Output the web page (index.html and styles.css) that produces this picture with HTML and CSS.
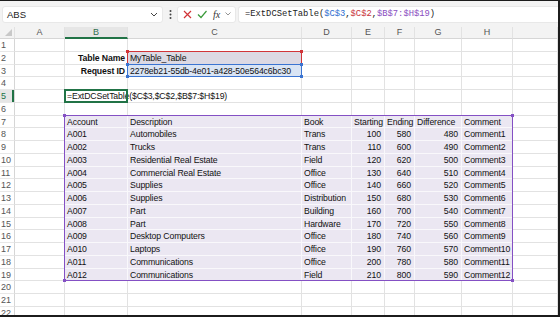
FILE: index.html
```html
<!DOCTYPE html>
<html lang="en">
  <head>
    <meta charset="UTF-8" />
    <title>ExtDCSetTable</title>
    <link rel="stylesheet" href="styles.css">
  </head>
  <body>
    <div class="app">
      <div class="formula-bar">
        <div class="name-box">
          <span>ABS</span>
          <svg width="8" height="5" viewBox="0 0 8 5"><path d="M1 1l3 3 3-3" fill="none" stroke="#444" stroke-width="1"/></svg>
        </div>
        <div class="dots">
          <svg width="3" height="9" viewBox="0 0 3 9"><circle cx="1.5" cy="1" r="1" fill="#444"/><circle cx="1.5" cy="4.5" r="1" fill="#444"/><circle cx="1.5" cy="8" r="1" fill="#444"/></svg>
        </div>
        <div class="fx-box">
          <svg width="9" height="9" viewBox="0 0 9 9"><path d="M1 1l7 7M8 1l-7 7" stroke="#d13438" stroke-width="1.2"/></svg>
          <svg width="10" height="9" viewBox="0 0 10 9"><path d="M1 4.5l3 3 5.5-6.5" fill="none" stroke="#3a9a3a" stroke-width="1.2"/></svg>
          <span class="fx">fx</span>
          <svg width="6" height="4" viewBox="0 0 6 4"><path d="M0.5 0.5l2.5 2.5 2.5-2.5" fill="none" stroke="#888" stroke-width="0.9"/></svg>
        </div>
        <div class="formula">=ExtDCSetTable(<span class="blue">$C$3</span>,<span class="red">$C$2</span>,<span class="purple">$B$7:$H$19</span>)</div>
      </div>

      <div class="sheet">
        <!-- column headers -->
        <div class="row">
          <div class="hd corner"></div>
          <div class="hd">A</div>
          <div class="hd sel">B</div>
          <div class="hd">C</div>
          <div class="hd">D</div>
          <div class="hd">E</div>
          <div class="hd">F</div>
          <div class="hd">G</div>
          <div class="hd">H</div>
          <div class="hd"></div>
        </div>

        <div class="row">
          <div class="rh">1</div>
          <div class="c"></div><div class="c"></div><div class="c"></div><div class="c"></div><div class="c"></div><div class="c"></div><div class="c"></div><div class="c"></div><div class="c"></div>
        </div>
        <div class="row">
          <div class="rh">2</div>
          <div class="c"></div><div class="c lbl">Table Name</div><div class="c name">MyTable_Table</div><div class="c"></div><div class="c"></div><div class="c"></div><div class="c"></div><div class="c"></div><div class="c"></div>
        </div>
        <div class="row">
          <div class="rh">3</div>
          <div class="c"></div><div class="c lbl">Request ID</div><div class="c req">2278eb21-55db-4e01-a428-50e564c6bc30</div><div class="c"></div><div class="c"></div><div class="c"></div><div class="c"></div><div class="c"></div><div class="c"></div>
        </div>
        <div class="row">
          <div class="rh">4</div>
          <div class="c"></div><div class="c"></div><div class="c"></div><div class="c"></div><div class="c"></div><div class="c"></div><div class="c"></div><div class="c"></div><div class="c"></div>
        </div>
        <div class="row">
          <div class="rh sel">5</div>
          <div class="c"></div><div class="c">=ExtDCSetTable($C$3,$C$2,$B$7:$H$19)</div><div class="c"></div><div class="c"></div><div class="c"></div><div class="c"></div><div class="c"></div><div class="c"></div><div class="c"></div>
        </div>
        <div class="row">
          <div class="rh">6</div>
          <div class="c"></div><div class="c"></div><div class="c"></div><div class="c"></div><div class="c"></div><div class="c"></div><div class="c"></div><div class="c"></div><div class="c"></div>
        </div>
        <div class="row">
          <div class="rh">7</div>
          <div class="c"></div><div class="c t">Account</div><div class="c t">Description</div><div class="c t">Book</div><div class="c t">Starting</div><div class="c t">Ending</div><div class="c t">Difference</div><div class="c t">Comment</div><div class="c"></div>
        </div>
        <div class="row">
          <div class="rh">8</div>
          <div class="c"></div><div class="c t">A001</div><div class="c t">Automobiles</div><div class="c t">Trans</div><div class="c t n">100</div><div class="c t n">580</div><div class="c t n">480</div><div class="c t">Comment1</div><div class="c"></div>
        </div>
        <div class="row">
          <div class="rh">9</div>
          <div class="c"></div><div class="c t">A002</div><div class="c t">Trucks</div><div class="c t">Trans</div><div class="c t n">110</div><div class="c t n">600</div><div class="c t n">490</div><div class="c t">Comment2</div><div class="c"></div>
        </div>
        <div class="row">
          <div class="rh">10</div>
          <div class="c"></div><div class="c t">A003</div><div class="c t">Residential Real Estate</div><div class="c t">Field</div><div class="c t n">120</div><div class="c t n">620</div><div class="c t n">500</div><div class="c t">Comment3</div><div class="c"></div>
        </div>
        <div class="row">
          <div class="rh">11</div>
          <div class="c"></div><div class="c t">A004</div><div class="c t">Commercial Real Estate</div><div class="c t">Office</div><div class="c t n">130</div><div class="c t n">640</div><div class="c t n">510</div><div class="c t">Comment4</div><div class="c"></div>
        </div>
        <div class="row">
          <div class="rh">12</div>
          <div class="c"></div><div class="c t">A005</div><div class="c t">Supplies</div><div class="c t">Office</div><div class="c t n">140</div><div class="c t n">660</div><div class="c t n">520</div><div class="c t">Comment5</div><div class="c"></div>
        </div>
        <div class="row">
          <div class="rh">13</div>
          <div class="c"></div><div class="c t">A006</div><div class="c t">Supplies</div><div class="c t">Distribution</div><div class="c t n">150</div><div class="c t n">680</div><div class="c t n">530</div><div class="c t">Comment6</div><div class="c"></div>
        </div>
        <div class="row">
          <div class="rh">14</div>
          <div class="c"></div><div class="c t">A007</div><div class="c t">Part</div><div class="c t">Building</div><div class="c t n">160</div><div class="c t n">700</div><div class="c t n">540</div><div class="c t">Comment7</div><div class="c"></div>
        </div>
        <div class="row">
          <div class="rh">15</div>
          <div class="c"></div><div class="c t">A008</div><div class="c t">Part</div><div class="c t">Hardware</div><div class="c t n">170</div><div class="c t n">720</div><div class="c t n">550</div><div class="c t">Comment8</div><div class="c"></div>
        </div>
        <div class="row">
          <div class="rh">16</div>
          <div class="c"></div><div class="c t">A009</div><div class="c t">Desktop Computers</div><div class="c t">Office</div><div class="c t n">180</div><div class="c t n">740</div><div class="c t n">560</div><div class="c t">Comment9</div><div class="c"></div>
        </div>
        <div class="row">
          <div class="rh">17</div>
          <div class="c"></div><div class="c t">A010</div><div class="c t">Laptops</div><div class="c t">Office</div><div class="c t n">190</div><div class="c t n">760</div><div class="c t n">570</div><div class="c t">Comment10</div><div class="c"></div>
        </div>
        <div class="row">
          <div class="rh">18</div>
          <div class="c"></div><div class="c t">A011</div><div class="c t">Communications</div><div class="c t">Office</div><div class="c t n">200</div><div class="c t n">780</div><div class="c t n">580</div><div class="c t">Comment11</div><div class="c"></div>
        </div>
        <div class="row">
          <div class="rh">19</div>
          <div class="c"></div><div class="c t">A012</div><div class="c t">Communications</div><div class="c t">Field</div><div class="c t n">210</div><div class="c t n">800</div><div class="c t n">590</div><div class="c t">Comment12</div><div class="c"></div>
        </div>
        <div class="row">
          <div class="rh">20</div>
          <div class="c"></div><div class="c"></div><div class="c"></div><div class="c"></div><div class="c"></div><div class="c"></div><div class="c"></div><div class="c"></div><div class="c"></div>
        </div>
        <div class="row">
          <div class="rh">21</div>
          <div class="c"></div><div class="c"></div><div class="c"></div><div class="c"></div><div class="c"></div><div class="c"></div><div class="c"></div><div class="c"></div><div class="c"></div>
        </div>
        <div class="row">
          <div class="rh">22</div>
          <div class="c"></div><div class="c"></div><div class="c"></div><div class="c"></div><div class="c"></div><div class="c"></div><div class="c"></div><div class="c"></div><div class="c"></div>
        </div>

        <!-- reference highlights drawn over the grid -->
        <div class="ref ref-name"></div>
        <div class="ref ref-req"></div>
        <div class="ref ref-table"></div>
        <div class="active"></div>
      </div>
    </div>
  </body>
</html>
```

FILE: styles.css
```css
* {
  box-sizing: border-box;
}

html,
body {
  margin: 0;
  padding: 0;
}

body {
  font-family: "Liberation Sans", Arial, sans-serif;
  background: #fff;
}

.app {
  width: 560px;
  height: 317px;
  overflow: hidden;
  display: flex;
  flex-direction: column;
  border-top: 1px solid #1c1c1c;
  border-right: 2px solid #1c1c1c;
  border-bottom: 2px solid #1c1c1c;
}

/* formula bar */

.formula-bar {
  flex: none;
  height: 26px;
  display: flex;
  align-items: center;
  padding-left: 2px;
  background: #f3f3f3;
}

.name-box,
.fx-box,
.formula {
  height: 17px;
  background: #fff;
  border: 1px solid #e8e8e8;
  border-radius: 3px;
  display: flex;
  align-items: center;
}

.name-box {
  width: 161px;
  justify-content: space-between;
  padding: 0 4px 0 4px;
  font-size: 9.5px;
  color: #222;
}

.dots {
  width: 14px;
  display: flex;
  justify-content: center;
}

.fx-box {
  width: 59px;
  gap: 5px;
  padding-left: 5px;
}

.fx {
  font-family: "Liberation Serif", serif;
  font-style: italic;
  font-size: 10px;
  color: #333;
  margin-left: 1px;
}

.formula {
  flex: 1;
  margin-left: 2px;
  border-radius: 3px 0 0 3px;
  border-right: none;
  padding-left: 6px;
  font-family: "Liberation Mono", monospace;
  font-size: 8.8px;
  color: #222;
}

.formula .blue {
  color: #2f6fd0;
}

.formula .red {
  color: #c8323a;
}

.formula .purple {
  color: #8a4dbf;
}

/* grid */

.sheet {
  position: relative;
  flex: none;
  display: grid;
  grid-template-columns: 15px 50px 63px 174px 50px 33px 30px 47px 51px 1fr;
  grid-template-rows: 12px repeat(22, 12.75px);
}

.row {
  display: contents;
}

.hd {
  background: #f3f3f3;
  border-right: 1px solid #e2e2e2;
  border-bottom: 1px solid #d6d6d6;
  font-size: 9px;
  line-height: 11px;
  color: #555;
  text-align: center;
}

.hd.sel {
  background: #e6e6e6;
  color: #33704f;
  border-bottom: 2px solid #217346;
}

.corner {
  position: relative;
}

.corner::after {
  content: "";
  position: absolute;
  right: 2px;
  bottom: 2px;
  width: 7px;
  height: 7px;
  background: #c8c8c8;
  clip-path: polygon(100% 0, 100% 100%, 0 100%);
}

.rh {
  border-right: 1px solid #d6d6d6;
  border-bottom: 1px solid #e8e8e8;
  font-size: 9px;
  line-height: 12px;
  padding-left: 1px;
  color: #555;
}

.rh.sel {
  background: #e6e6e6;
  color: #217346;
  box-shadow: inset -2px 0 #217346;
}

.c {
  border-right: 1px solid #e2e2e2;
  border-bottom: 1px solid #e2e2e2;
  font-size: 8.7px;
  letter-spacing: -0.12px;
  line-height: 12.5px;
  padding: 0 2px;
  white-space: nowrap;
  color: #111;
}

.c.t {
  background: #ebe7f2;
  border-color: #f9f8fb;
}

.c.n {
  text-align: right;
  padding-right: 3px;
}

.c.lbl {
  font-weight: bold;
  text-align: right;
}

.c.name {
  background: #dcd9e3;
}

.c.req {
  background: #d9e4f4;
}

/* reference outlines */

.ref,
.active {
  position: absolute;
  inset: -1px 0 0 -1px;
  pointer-events: none;
}

.ref::before,
.ref::after {
  content: "";
  position: absolute;
  left: -2px;
  right: -2px;
  height: 3px;
  background: linear-gradient(
    to right,
    currentColor 3px,
    transparent 3px,
    transparent calc(100% - 3px),
    currentColor calc(100% - 3px)
  );
}

.ref::before {
  top: -2px;
}

.ref::after {
  bottom: -2px;
}

.ref-name {
  grid-area: 3 / 4 / 4 / 5;
  color: #d13438;
  border: 1px solid currentColor;
}

.ref-req {
  grid-area: 4 / 4 / 5 / 5;
  color: #3b74d1;
  border: 1px solid currentColor;
}

.ref-table {
  grid-area: 8 / 3 / 21 / 10;
  color: #8450c4;
  border: 1px solid currentColor;
}

.active {
  grid-area: 6 / 3 / 7 / 4;
  border: 2px solid #217346;
}
```
